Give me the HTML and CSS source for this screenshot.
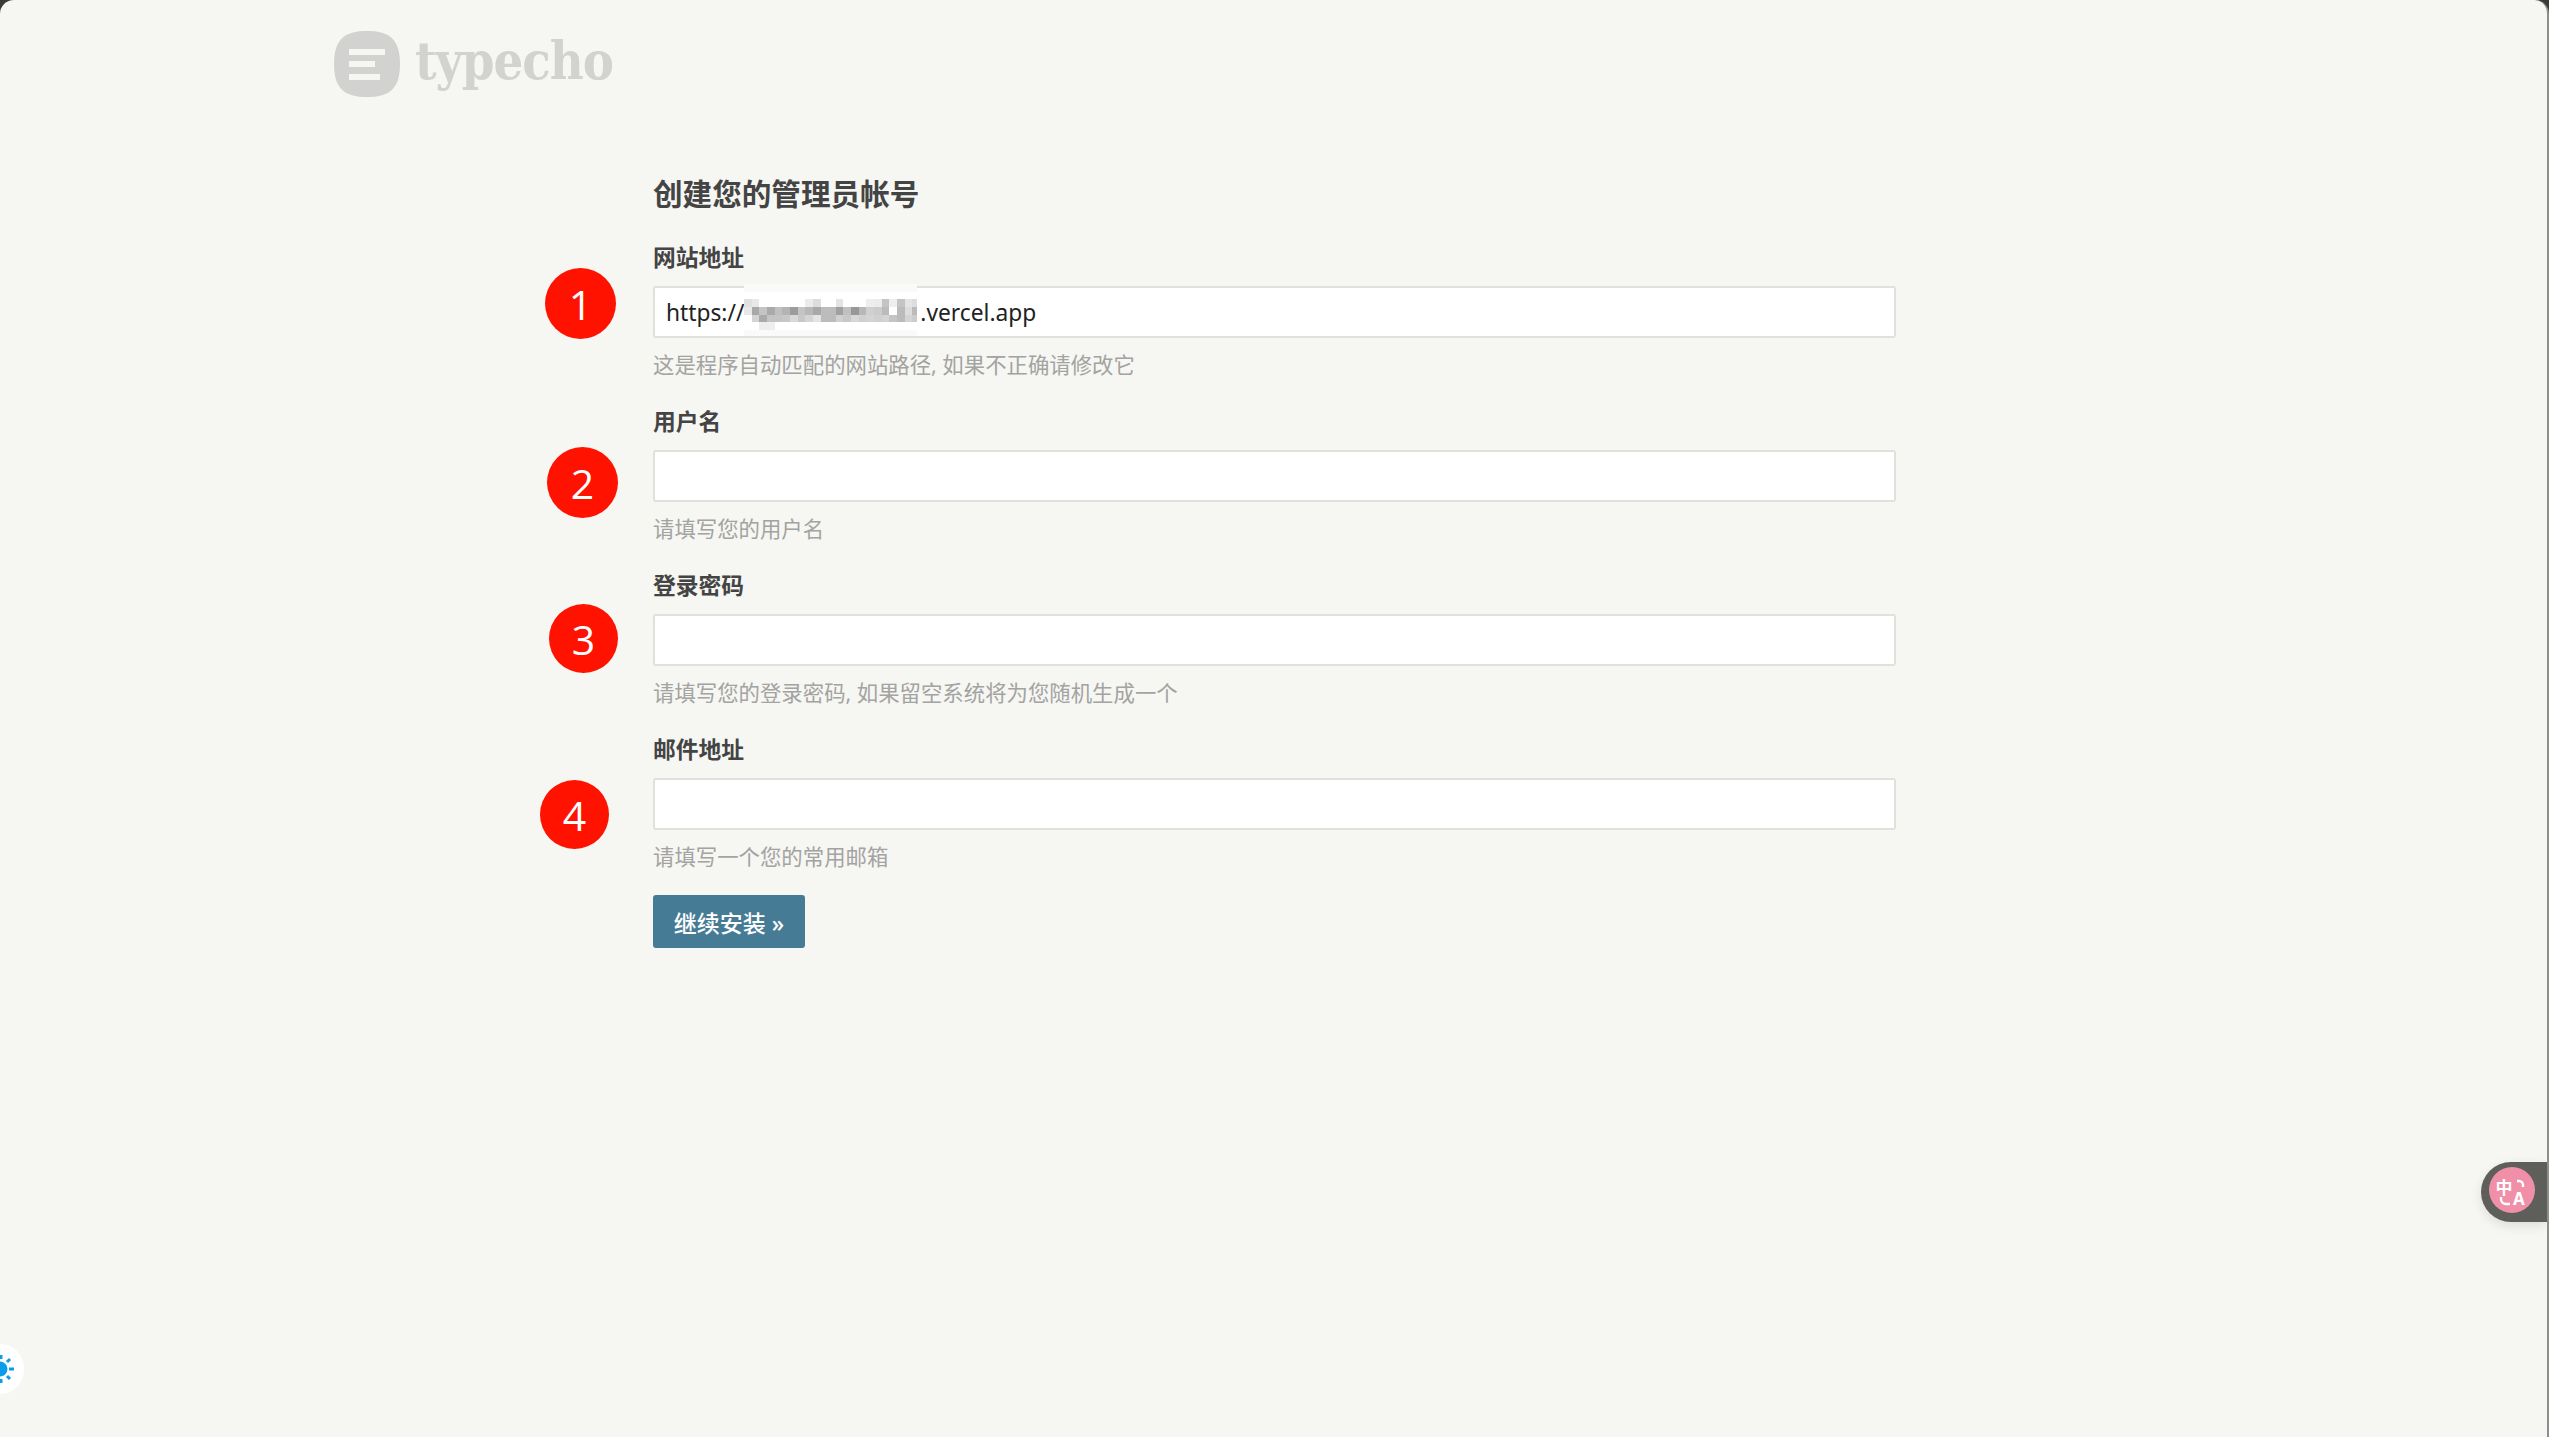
FILE: index.html
```html
<!DOCTYPE html>
<html lang="zh-CN">
<head>
    <meta charset="UTF-8">
    <title>Typecho 安装</title>
    <link rel="stylesheet" href="styles.css">
</head>
<body>
    <div class="window">
        <header class="logo">
            <svg class="logo-icon" viewBox="0 0 66 66" width="66" height="66">
                <path fill="#d2d2d0" d="M33 0C12 0 0 7 0 33s12 33 33 33 33-7 33-33S54 0 33 0z"/>
                <rect x="15" y="18" width="36" height="6" fill="#f6f6f3"/>
                <rect x="15" y="30" width="26" height="6" fill="#f6f6f3"/>
                <rect x="15" y="43" width="31" height="6" fill="#f6f6f3"/>
            </svg>
            <span class="logo-text">typecho</span>
        </header>

        <form class="install-form">
            <h1>创建您的管理员帐号</h1>

            <div class="field">
                <label>网站地址</label>
                <div class="input-wrap">
                    <input class="site-url" type="text" value="https://                              .vercel.app">
                    <!-- pixelated part of the address -->
                    <svg class="mosaic" viewBox="0 0 22.6 6.8" width="173" height="52" shape-rendering="crispEdges">
                        <rect width="22.6" height="6.8" fill="#fafaf9"/>
                        <rect y="1" width="22.6" height="5" fill="#fff"/>

                        <rect x="0" y="2" width="1" height="1" fill="#e0e0e0"/>
                        <rect x="1" y="2" width="1" height="1" fill="#e8e8e8"/>
                        <rect x="8" y="2" width="1" height="1" fill="#ececec"/>
                        <rect x="9" y="2" width="1" height="1" fill="#ddd"/>
                        <rect x="12" y="2" width="1" height="1" fill="#e4e4e4"/>
                        <rect x="16" y="2" width="1" height="1" fill="#eee"/>
                        <rect x="17" y="2" width="1" height="1" fill="#ececec"/>
                        <rect x="18" y="2" width="1" height="1" fill="#c4c4c4"/>
                        <rect x="19" y="2" width="1" height="1" fill="#eee"/>
                        <rect x="20" y="2" width="1" height="1" fill="#c4c4c4"/>
                        <rect x="21" y="2" width="1" height="1" fill="#e4e4e4"/>
                        <rect x="22" y="2" width="0.6" height="1" fill="#ddd"/>

                        <rect x="0" y="3" width="1" height="1" fill="#e8e8e8"/>
                        <rect x="1" y="3" width="1" height="1" fill="#a8a8a8"/>
                        <rect x="2" y="3" width="1" height="1" fill="#c4c4c4"/>
                        <rect x="3" y="3" width="1" height="1" fill="#aaa"/>
                        <rect x="4" y="3" width="1" height="1" fill="#c0c0c0"/>
                        <rect x="5" y="3" width="1" height="1" fill="#b4b4b4"/>
                        <rect x="6" y="3" width="1" height="1" fill="#9c9c9c"/>
                        <rect x="7" y="3" width="1" height="1" fill="#c4c4c4"/>
                        <rect x="8" y="3" width="1" height="1" fill="#b8b8b8"/>
                        <rect x="9" y="3" width="1" height="1" fill="#a8a8a8"/>
                        <rect x="10" y="3" width="2" height="1" fill="#bcbcbc"/>
                        <rect x="12" y="3" width="1" height="1" fill="#a0a0a0"/>
                        <rect x="13" y="3" width="1" height="1" fill="#c0c0c0"/>
                        <rect x="14" y="3" width="1" height="1" fill="#989898"/>
                        <rect x="15" y="3" width="1" height="1" fill="#b8b8b8"/>
                        <rect x="16" y="3" width="1" height="1" fill="#d0d0d0"/>
                        <rect x="17" y="3" width="1" height="1" fill="#ccc"/>
                        <rect x="18" y="3" width="1" height="1" fill="#bbb"/>
                        <rect x="20" y="3" width="1" height="1" fill="#bbb"/>
                        <rect x="21" y="3" width="1" height="1" fill="#ddd"/>
                        <rect x="22" y="3" width="0.6" height="1" fill="#bbb"/>

                        <rect x="1" y="4" width="1" height="1" fill="#d4d4d4"/>
                        <rect x="2" y="4" width="1" height="1" fill="#aaa"/>
                        <rect x="3" y="4" width="2" height="1" fill="#c4c4c4"/>
                        <rect x="5" y="4" width="1" height="1" fill="#c8c8c8"/>
                        <rect x="6" y="4" width="1" height="1" fill="#d8d8d8"/>
                        <rect x="7" y="4" width="1" height="1" fill="#c8c8c8"/>
                        <rect x="8" y="4" width="1" height="1" fill="#d4d4d4"/>
                        <rect x="9" y="4" width="1" height="1" fill="#e4e4e4"/>
                        <rect x="10" y="4" width="2" height="1" fill="#bcbcbc"/>
                        <rect x="12" y="4" width="1" height="1" fill="#d0d0d0"/>
                        <rect x="13" y="4" width="1" height="1" fill="#c8c8c8"/>
                        <rect x="14" y="4" width="1" height="1" fill="#d8d8d8"/>
                        <rect x="15" y="4" width="1" height="1" fill="#d0d0d0"/>
                        <rect x="16" y="4" width="1" height="1" fill="#d4d4d4"/>
                        <rect x="17" y="4" width="1" height="1" fill="#d0d0d0"/>
                        <rect x="18" y="4" width="1" height="1" fill="#d4d4d4"/>
                        <rect x="19" y="4" width="1" height="1" fill="#c4c4c4"/>
                        <rect x="20" y="4" width="1" height="1" fill="#bbb"/>
                        <rect x="21" y="4" width="1" height="1" fill="#d4d4d4"/>
                        <rect x="22" y="4" width="0.6" height="1" fill="#ccc"/>

                        <rect x="2" y="5" width="2" height="1" fill="#eee"/>
                    </svg>
                </div>
                <p class="hint">这是程序自动匹配的网站路径, 如果不正确请修改它</p>
            </div>

            <div class="field">
                <label>用户名</label>
                <div class="input-wrap"><input type="text"></div>
                <p class="hint">请填写您的用户名</p>
            </div>

            <div class="field">
                <label>登录密码</label>
                <div class="input-wrap"><input type="password"></div>
                <p class="hint">请填写您的登录密码, 如果留空系统将为您随机生成一个</p>
            </div>

            <div class="field">
                <label>邮件地址</label>
                <div class="input-wrap"><input type="text"></div>
                <p class="hint">请填写一个您的常用邮箱</p>
            </div>

            <button class="submit" type="button">继续安装 »</button>
        </form>

        <!-- red numbers drawn over the screenshot -->
        <span class="mark mark-1">1</span>
        <span class="mark mark-2">2</span>
        <span class="mark mark-3">3</span>
        <span class="mark mark-4">4</span>

        <div class="translate-tab">
            <svg class="translate-icon" viewBox="0 0 46 46" width="46" height="46">
                <circle cx="23" cy="23" r="23" fill="#ef8fa8"/>
                <text x="6.5" y="27" class="translate-zh">中</text>
                <text x="24" y="37.5" class="translate-en">A</text>
                <path d="M28 14h2a4 4 0 0 1 4 4v2M12 30v2a5 5 0 0 0 5 5h4" fill="none" stroke="#fff" stroke-width="2.4"/>
            </svg>
        </div>

        <div class="theme-btn">
            <svg viewBox="0 0 24 50" width="24" height="50">
                <circle cx="0" cy="25" r="7.5" fill="#0a9ee8"/>
                <path d="M9 25h5M7 18l3-3M7 32l3 3M1 11v4M1 35v4" stroke="#0a9ee8" stroke-width="3" fill="none"/>
            </svg>
        </div>
    </div>
</body>
</html>
```
FILE: styles.css
```css
* {
    box-sizing: border-box;
    margin: 0;
    padding: 0;
}

html,
body {
    height: 100%;
}

body {
    background: #3a3a38;
    font-family: "Noto Sans", "Noto Sans CJK SC", sans-serif;
    color: #444;
    overflow: hidden;
}

.window {
    position: relative;
    height: 100%;
    background: #f6f6f3;
    border-right: 2px solid #8e8e8c;
    border-radius: 14px 14px 0 0;
    overflow: hidden;
}

.logo {
    display: flex;
    align-items: center;
    gap: 15px;
    padding: 31px 0 0 334px;
    height: 97px;
}

.logo-text {
    padding-bottom: 6px;
    font-family: "DejaVu Serif", serif;
    font-stretch: condensed;
    font-weight: bold;
    font-size: 52px;
    line-height: 66px;
    letter-spacing: -1px;
    color: #d2d2d0;
}

.install-form {
    width: 1243px;
    margin-left: 653px;
    padding-top: 74px;
}

h1 {
    font-size: 29.6px;
    line-height: 46px;
    font-weight: bold;
    margin-bottom: 29px;
}

.field {
    height: 164px;
}

.field label {
    display: block;
    font-size: 22.75px;
    line-height: 24px;
    font-weight: bold;
    margin-bottom: 16px;
}

.input-wrap {
    position: relative;
}

.field input {
    display: block;
    width: 100%;
    height: 52px;
    padding: 0 11px;
    border: 2px solid #e0e0dc;
    border-radius: 3px;
    background: #fff;
    font-family: inherit;
    font-size: 22.75px;
    color: #222;
    outline: none;
}

.field .site-url {
    word-spacing: -0.05px;
}

.mosaic {
    position: absolute;
    left: 91px;
    top: -2px;
}

.hint {
    margin-top: 14px;
    font-size: 21.4px;
    line-height: 26px;
    color: #a3a3a1;
}

.submit {
    display: block;
    width: 152px;
    height: 53px;
    margin-top: -7px;
    border: none;
    border-radius: 3px;
    background: #467b96;
    color: #fff;
    font-family: inherit;
    font-size: 23px;
    font-weight: 500;
}

.mark {
    position: absolute;
    display: flex;
    align-items: center;
    justify-content: center;
    width: 71px;
    height: 71px;
    border-radius: 50%;
    background: #ff1200;
    color: #fff;
    font-size: 41px;
    font-family: "Open Sans", sans-serif;
}

.mark-1 { left: 545px; top: 268px; }
.mark-2 { left: 547px; top: 447px; }
.mark-3 { left: 549px; top: 604px; width: 69px; height: 69px; }
.mark-4 { left: 540px; top: 780px; width: 69px; height: 69px; }

.translate-tab {
    position: absolute;
    right: 0;
    top: 1162px;
    width: 66px;
    height: 60px;
    padding: 5px 0 0 8px;
    background: #5e5e5a;
    border-radius: 30px 0 0 30px;
    box-shadow: 0 4px 12px rgba(0, 0, 0, 0.1);
}

.translate-icon {
    display: block;
}

.translate-zh {
    font-size: 17px;
    font-weight: bold;
    fill: #fff;
}

.translate-en {
    font-size: 17px;
    font-weight: bold;
    fill: #fff;
}

.theme-btn {
    position: absolute;
    left: 0;
    top: 1344px;
    width: 24px;
    height: 50px;
    background: #fff;
    border-radius: 0 25px 25px 0;
}

.theme-btn svg {
    display: block;
}
```
